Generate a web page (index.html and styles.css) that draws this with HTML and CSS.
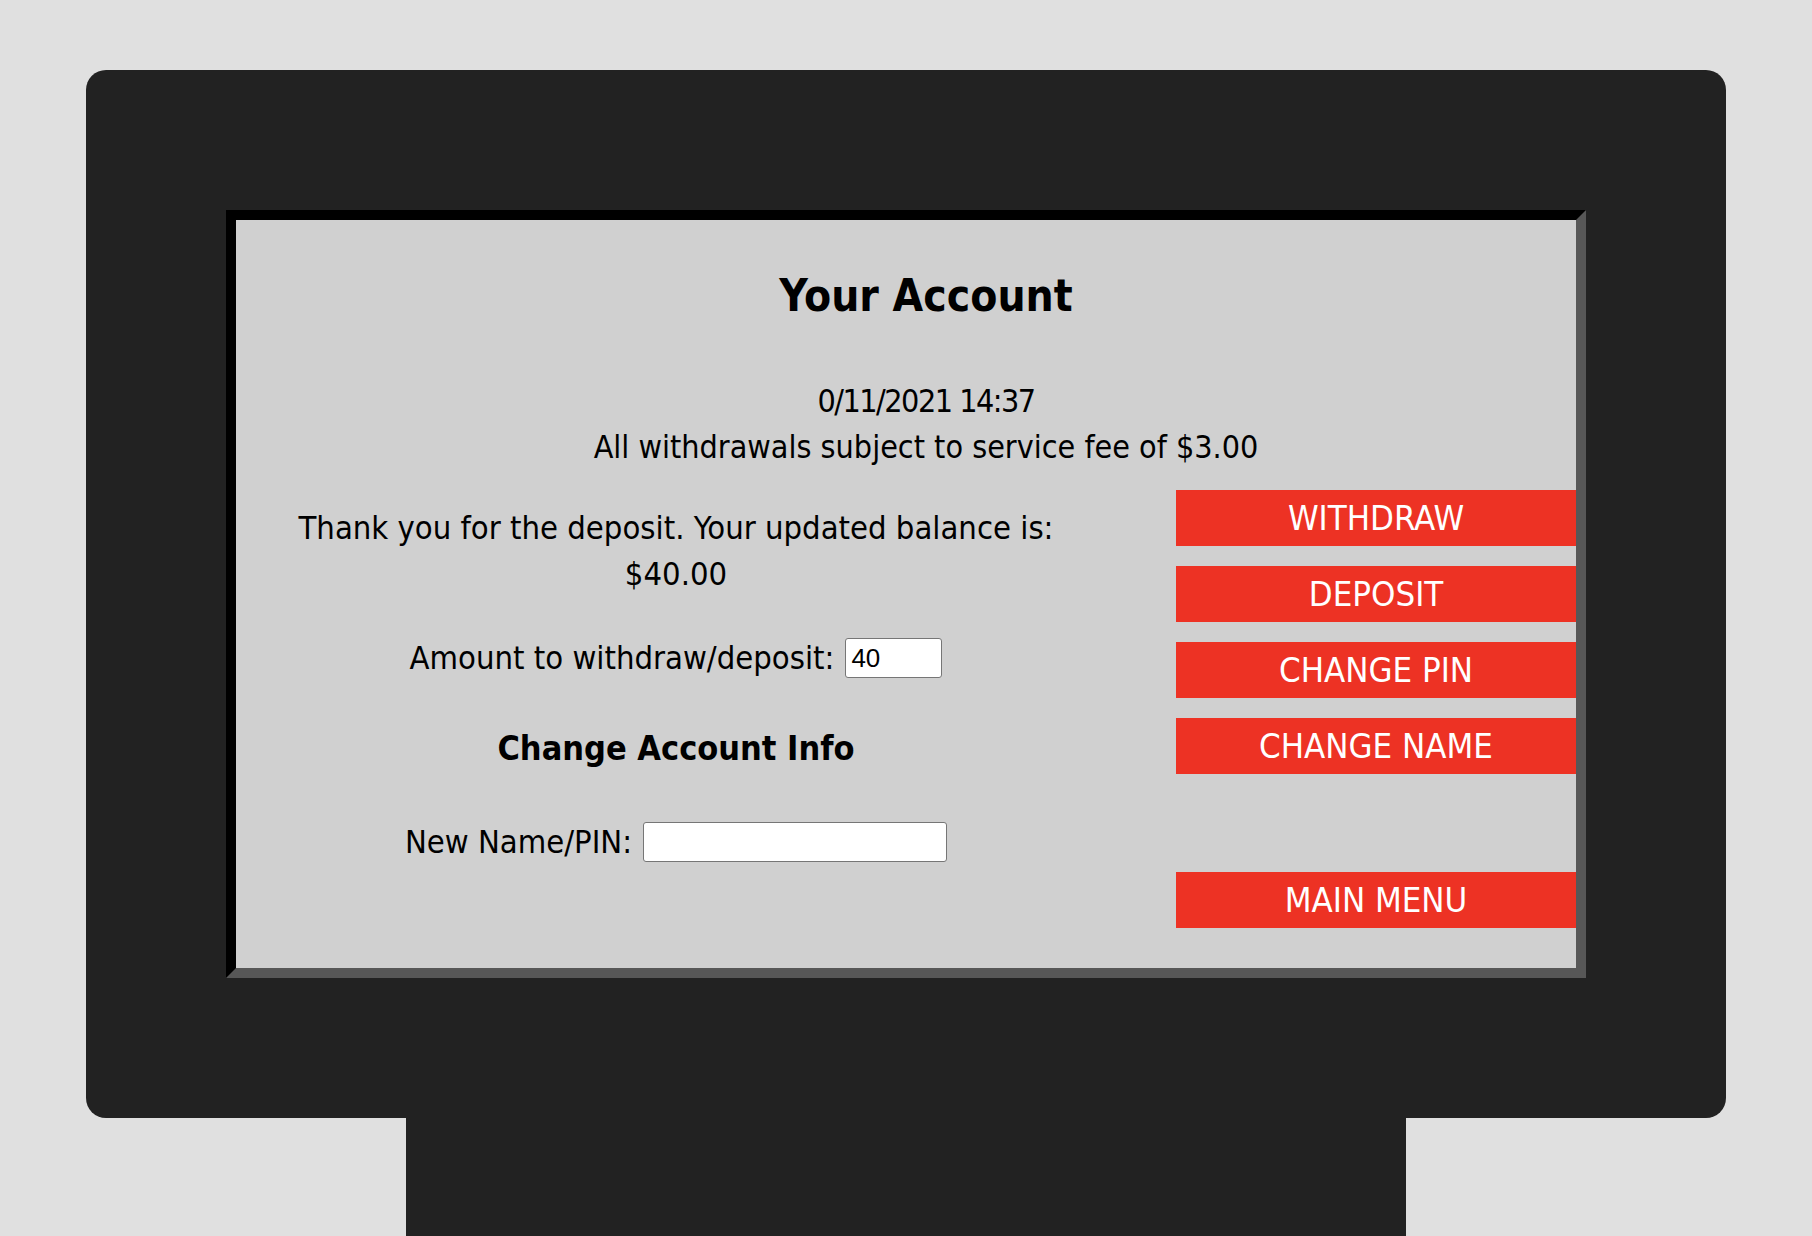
FILE: index.html
```html
<!DOCTYPE html>
<html lang="en">
<head>
<meta charset="utf-8">
<title>ATM - Your Account</title>
<link rel="stylesheet" href="styles.css">
</head>
<body>
<div class="atm">
  <div class="screen">
    <h1 class="title">Your Account</h1>
    <div class="info">
      <div class="date">0/11/2021 14:37</div>
      <div>All withdrawals subject to service fee of $3.00</div>
    </div>
    <div class="main">
      <div class="left">
        <p class="msg">Thank you for the deposit. Your updated balance is:<br>$40.00</p>
        <div class="field">
          <label for="amt">Amount to withdraw/deposit:</label>
          <input id="amt" class="amount" type="text" value="40">
        </div>
        <h2 class="sub">Change Account Info</h2>
        <div class="field">
          <label for="nm">New Name/PIN:</label>
          <input id="nm" class="name" type="text" value="">
        </div>
      </div>
      <div class="right">
        <button class="btn">WITHDRAW</button>
        <button class="btn">DEPOSIT</button>
        <button class="btn">CHANGE PIN</button>
        <button class="btn">CHANGE NAME</button>
        <button class="btn menu">MAIN MENU</button>
      </div>
    </div>
  </div>
</div>
<div class="stand"></div>
</body>
</html>
```

FILE: styles.css
```css
html, body {
  margin: 0;
  padding: 0;
  overflow: hidden;
}

body {
  background: #e0e0e0;
  font-family: "DejaVu Sans Condensed", "DejaVu Sans", sans-serif;
  color: #000;
}

.atm {
  width: 1640px;
  height: 1048px;
  margin: 70px auto 0;
  padding: 140px;
  box-sizing: border-box;
  background: #222222;
  border-radius: 20px;
}

.screen {
  height: 768px;
  box-sizing: border-box;
  border-style: solid;
  border-width: 10px;
  border-color: #000 #575757 #575757 #000;
  background: #d0d0d0;
  padding-left: 40px;
}

.title {
  margin: 46px 0 0;
  font-size: 44px;
  line-height: 60px;
  font-weight: bold;
  text-align: center;
}

.info {
  margin-top: 52px;
  font-size: 32px;
  line-height: 46px;
  text-align: center;
}

.date {
  letter-spacing: -1.5px;
}

.main {
  margin-top: 20px;
  display: grid;
  grid-template-columns: 800px 400px;
  column-gap: 100px;
}

.left {
  padding-top: 15px;
  text-align: center;
  font-size: 32.5px;
}

.msg {
  margin: 0;
  line-height: 46px;
  white-space: nowrap;
}

.field {
  display: flex;
  justify-content: center;
  align-items: center;
  gap: 11px;
  height: 46px;
  margin-top: 38px;
  line-height: 46px;
}

.sub {
  margin: 42px 0 0;
  font-size: 34px;
  line-height: 50px;
  font-weight: bold;
}

.sub + .field {
  margin-top: 46px;
}

.field input {
  box-sizing: border-box;
  height: 40px;
  margin: 0;
  padding: 2px 5px;
  background: #fff;
  border: 1px solid #767676;
  border-radius: 3px;
  font-family: "Liberation Sans", Arial, sans-serif;
  font-size: 26px;
  color: #000;
}

.amount {
  width: 97px;
}

.name {
  width: 304px;
}

.right {
  display: flex;
  flex-direction: column;
  gap: 20px;
}

.btn {
  display: block;
  width: 400px;
  height: 56px;
  margin: 0;
  padding: 0;
  border: none;
  background: #ed3224;
  color: #fff;
  font-family: "DejaVu Sans Condensed", "DejaVu Sans", sans-serif;
  font-size: 34.5px;
  line-height: 56px;
  text-align: center;
}

.menu {
  margin-top: 78px;
}

.stand {
  width: 1000px;
  height: 118px;
  margin: 0 auto;
  background: #222222;
}
```
